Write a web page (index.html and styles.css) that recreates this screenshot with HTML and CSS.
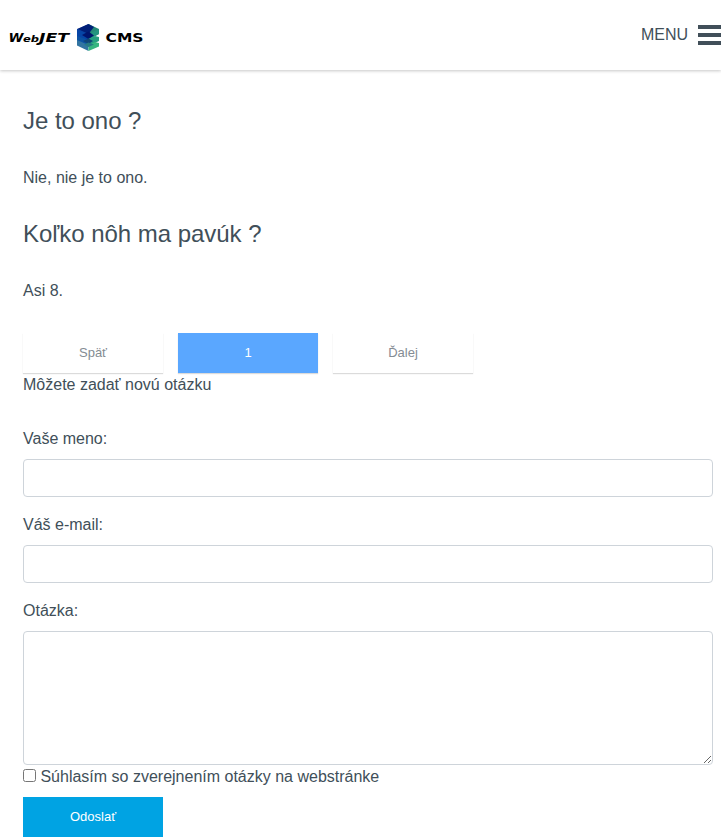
FILE: index.html
```html
<!DOCTYPE html>
<html lang="sk">
<head>
<meta charset="utf-8">
<title>WebJET CMS</title>
<link rel="stylesheet" href="styles.css">
</head>
<body>
<header class="header">
  <svg class="logo" width="136" height="30" viewBox="0 0 136 30" role="img" aria-label="WebJET CMS">
    <g class="wordmark">
      <text class="slanted" x="0.5" y="20" font-size="13" textLength="15" lengthAdjust="spacingAndGlyphs">W</text>
      <text class="slanted" x="15" y="20" font-size="9" textLength="16" lengthAdjust="spacingAndGlyphs">eb</text>
      <text class="slanted" x="31" y="20" font-size="13" textLength="30" lengthAdjust="spacingAndGlyphs">JET</text>
      <text x="97.500" y="20" font-size="13" textLength="38" lengthAdjust="spacingAndGlyphs">CMS</text>
    </g>
    <path fill="#12358f" d="M69 7 80.500 2V14L69 20z"/>
    <path fill="#258878" d="M80.500 2 91 7V12L80.500 17z"/>
    <path fill="#001f78" d="M70 7 80.500 2 86 5 80.500 12z"/>
    <path fill="#0645a6" d="M69 7 80.500 12V22L69 16z"/>
    <path fill="#24947f" d="M80.500 12 91 7V12L80.500 18z"/>
    <path fill="#00156e" d="M74 13 80.500 9.500 86 13.500 80.500 17z"/>
    <path fill="#0b52a3" d="M69 14 80.500 18V25L69 20z"/>
    <path fill="#279e80" d="M80.500 17 87 14 91 15V19L80.500 24z"/>
    <path fill="#104578" d="M75 19 80.500 16.500 85 19 80.500 22z"/>
    <path fill="#3274a1" d="M69 18 80.500 23V29L69 23.500z"/>
    <path fill="#37b57e" d="M80.500 23 87 20 91 21V24.500L80.500 29z"/>
    <path fill="#267983" d="M76 22.500 80.500 20.500 86 22.500 80.500 25z"/>
  </svg>
  <div class="menu">
    <span>MENU</span>
    <span class="bars"><i></i><i></i><i></i></span>
  </div>
</header>
<main class="content">
  <h2>Je to ono ?</h2>
  <p>Nie, nie je to ono.</p>
  <h2>Koľko nôh ma pavúk ?</h2>
  <p>Asi 8.</p>
  <nav class="pages">
    <a class="page">Späť</a>
    <a class="page active">1</a>
    <a class="page">Ďalej</a>
  </nav>
  <p class="intro">Môžete zadať novú otázku</p>
  <form>
    <div class="field">
      <label for="name">Vaše meno:</label>
      <input class="control" id="name" type="text">
    </div>
    <div class="field">
      <label for="email">Váš e-mail:</label>
      <input class="control" id="email" type="text">
    </div>
    <div class="field last">
      <label for="question">Otázka:</label>
      <textarea class="control area" id="question"></textarea>
    </div>
    <label class="consent"><input type="checkbox"><span>Súhlasím so zverejnením otázky na webstránke</span></label>
    <button class="submit" type="button">Odoslať</button>
  </form>
</main>
</body>
</html>
```
FILE: styles.css
```css
* {
  box-sizing: border-box;
}

body {
  margin: 0;
  background: #fff;
  color: #414f59;
  font: 16px/24px "Liberation Sans", Arial, sans-serif;
  overflow: hidden;
}

.header {
  display: flex;
  justify-content: space-between;
  height: 70px;
  padding-left: 8px;
  box-shadow: 0 1px 3px rgba(0, 0, 0, 0.22);
}

.logo {
  margin-top: 22px;
}

.wordmark {
  font-family: "DejaVu Sans", sans-serif;
  font-weight: bold;
  fill: #000;
}

.slanted {
  font-style: italic;
}

.menu {
  display: flex;
  gap: 10px;
  padding-top: 23px;
}

.bars {
  display: flex;
  flex-direction: column;
  gap: 4px;
  width: 23px;
  padding-top: 2px;
}

.bars i {
  height: 4px;
  background: #414f59;
}

.content {
  padding: 36px 8px 0 23px;
}

h2 {
  margin: 0 0 31px;
  font-size: 24px;
  font-weight: 400;
  line-height: 29px;
  letter-spacing: -0.03px;
}

p {
  margin: 0 0 29px;
}

p + .pages {
  margin-top: 30px;
}

.intro {
  margin-bottom: 30px;
}

.pages {
  display: flex;
  gap: 15px;
}

.page {
  width: 140px;
  height: 40px;
  color: #848c93;
  font-size: 13px;
  line-height: 40px;
  text-align: center;
  box-shadow: 0 1px 1px rgba(0, 0, 0, 0.14);
}

.active {
  background: #5aa7ff;
  color: #fff;
}

.field {
  margin-bottom: 16px;
}

.last {
  margin-bottom: 0;
}

.field label {
  display: block;
  margin-bottom: 8px;
}

.control {
  display: block;
  width: 100%;
  height: 38px;
  margin: 0;
  border: 1px solid #ced4da;
  border-radius: 4px;
  background: #fff;
}

.area {
  height: 134px;
}

.consent {
  display: flex;
  gap: 4.45px;
}

.consent input {
  width: 13px;
  height: 13px;
  margin: 4px 0 0;
}

.submit {
  display: block;
  width: 140px;
  height: 40px;
  margin-top: 8px;
  padding: 0;
  border: 0;
  background: #00a3e3;
  color: #fff;
  font: 13px/40px "Liberation Sans", Arial, sans-serif;
}
```
